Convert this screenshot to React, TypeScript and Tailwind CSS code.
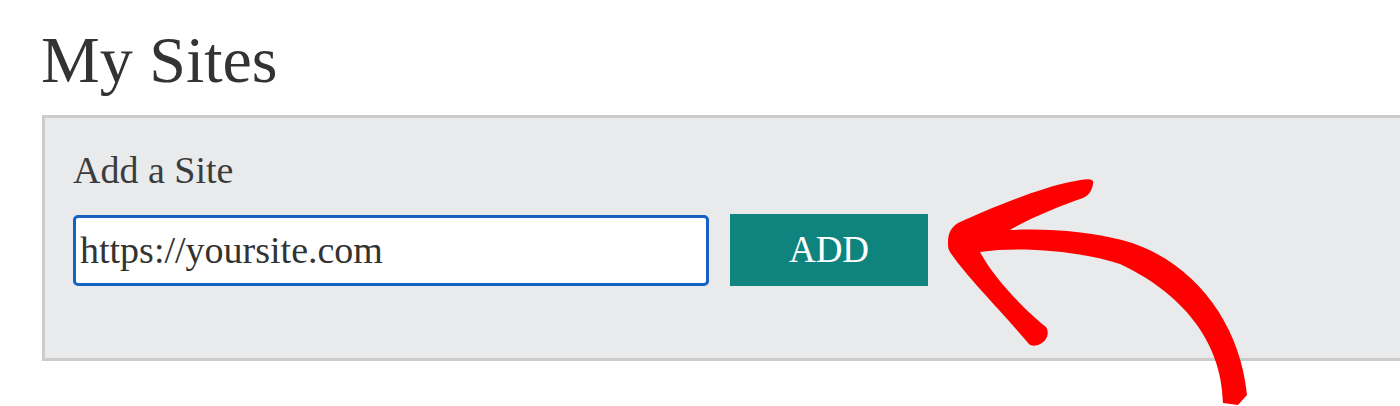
import React from 'react';

function RedArrow() {
  // hand-drawn annotation arrow, sits over the page
  return (
    <svg
      className="pointer-events-none absolute left-0 top-0"
      width="1400"
      height="406"
      viewBox="0 0 1400 406"
    >
      <path
        fill="#ff0000"
        d="M 948 242
           C 948 232, 952 227, 958 223
           C 990 208, 1040 188, 1070 182
           C 1085 179, 1095 177, 1093 184
           C 1092 191, 1088 196, 1083 198
           C 1060 206, 1030 218, 1010 230
           C 1050 228, 1090 232, 1122 240
           C 1190 258, 1240 320, 1247 395
           L 1238 405 L 1223 403
           C 1222 340, 1180 292, 1120 264
           C 1080 251, 1020 246, 980 252
           C 995 280, 1025 310, 1046 327
           C 1050 333, 1047 342, 1038 345
           C 1034 346, 1031 346, 1029 344
           C 1005 315, 965 275, 950 252
           C 948 249, 948 246, 948 242 Z"
      />
    </svg>
  );
}

export default function App() {
  return (
    <div className="relative h-[406px] w-[1400px] overflow-hidden bg-white font-['Liberation_Serif',serif]">
      <div className="pl-[41px] pt-[22px]">
        <h1 className="text-[66px] leading-[76px] font-normal text-[#333333]">My Sites</h1>
      </div>

      {/* Add site panel */}
      <div className="ml-[42px] mt-[17px] h-[246px] border-y-[3px] border-l-[3px] border-[#cccccc] bg-[#e9eaec] pl-[28px] pt-[31px]">
        <p className="text-[38px] leading-[42px] text-[#3c3c3c]">Add a Site</p>
        <div className="mt-[23px] flex items-center gap-[21px]">
          <div className="flex h-[71px] w-[636px] items-center rounded-[5px] border-[3px] border-[#1662c2] bg-white pl-[4px] text-[38px] text-[#333333]">
            https://yoursite.com
          </div>
          <button className="flex h-[72px] w-[198px] items-center justify-center bg-[#0f847f] text-[37px] text-white">
            ADD
          </button>
        </div>
      </div>

      <RedArrow />
    </div>
  );
}
